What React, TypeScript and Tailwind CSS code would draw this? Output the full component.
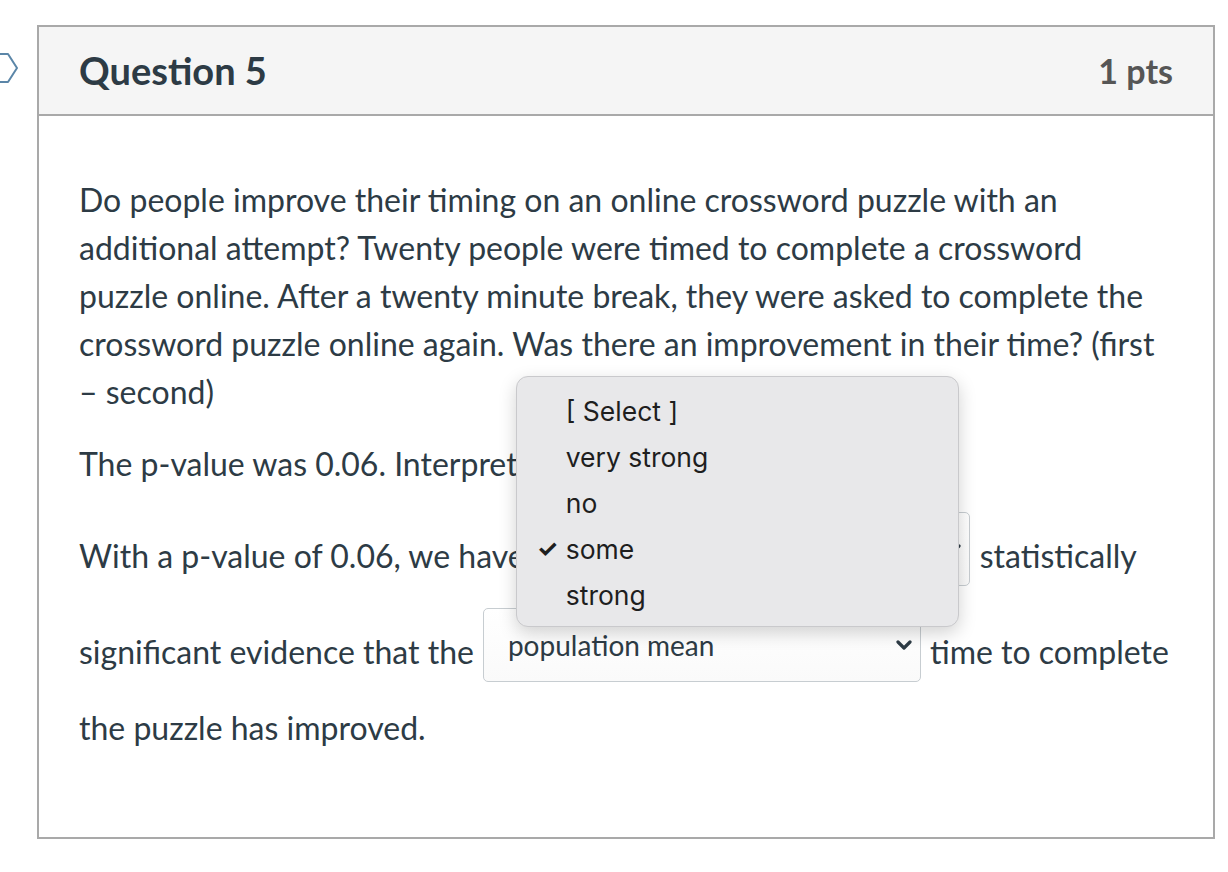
import React from "react";

const lato = "font-['Lato','Noto_Sans',sans-serif]";

function Chevron({ className = "" }: { className?: string }) {
  return (
    <svg viewBox="0 0 16 10" className={className} fill="none">
      <path d="M2 2l6 6 6-6" stroke="#2d3b45" strokeWidth="3.2" strokeLinecap="round" strokeLinejoin="round" />
    </svg>
  );
}

function FakeSelect({ value, width, children }: { value: string; width: string; children?: React.ReactNode }) {
  return (
    <div className={`relative shrink-0 ${width}`}>
      <div className="flex h-[74px] items-start justify-between rounded-[5px] border border-[#c7cdd1] bg-gradient-to-b from-white to-[#fafafa] pl-[24px] pr-[8px] pt-[18px]">
        <span className="text-[28px] leading-[36px] text-[#2d3b45]">{value}</span>
        <Chevron className="mt-[13px] h-[10px] w-[16px]" />
      </div>
      {children}
    </div>
  );
}

const options = ["[ Select ]", "very strong", "no", "some", "strong"];

// native option list, open over the first select
function OptionMenu() {
  return (
    <div className="absolute left-[-19px] top-[-136px] z-10 w-[443px] rounded-[12px] border border-[#c9c9cc] bg-[#e8e8ea] pb-[8px] pt-[11px] shadow-[0_6px_18px_rgba(0,0,0,0.18)] font-['Inter','Liberation_Sans',sans-serif] text-[26.5px] text-[#1e1e1e]">
      {options.map((o) => (
        <div key={o} className="flex h-[46px] items-center">
          <span className="w-[49px] pl-[20px] text-[24px] font-bold">{o === "some" ? "✓" : ""}</span>
          <span>{o}</span>
        </div>
      ))}
    </div>
  );
}

export default function App() {
  return (
    <div className={`min-h-[872px] bg-white pt-[25px] ${lato}`}>
      <div className="flex">
        <div className="w-[37px] shrink-0 pt-[27px]">
          <svg viewBox="0 0 37 40" className="h-[40px] w-[37px]" fill="none">
            <path d="M-10 2 H8 L17 16 L8 30 H-10" stroke="#5b86a8" strokeWidth="2" strokeLinejoin="round" />
          </svg>
        </div>

        <div className="w-[1178px] border-2 border-[#a9a9a9] text-[#2d3b45]">
          <div className="flex h-[89px] items-center justify-between border-b-2 border-[#a9a9a9] bg-[#f5f5f5] px-[40px]">
            <h2 className="text-[38px] font-bold">Question 5</h2>
            <span className="text-[34px] font-bold text-[#565656]">1 pts</span>
          </div>

          <div className="px-[40px] pb-[85px] pt-[60px] text-[32px] leading-[48px]">
            <p className="mb-[24px]">
              Do people improve their timing on an online crossword puzzle with an additional attempt? Twenty people were
              timed to complete a crossword puzzle online. After a twenty minute break, they were asked to complete the
              crossword puzzle online again. Was there an improvement in their time? (first – second)
            </p>
            <p>The p-value was 0.06. Interpret the p-value.</p>

            <div className="mt-[24px] flex items-center gap-[10px]">
              <span className="mt-[14px]">With a p-value of 0.06, we have</span>
              <FakeSelect value="some" width="w-[435px]">
                <OptionMenu />
              </FakeSelect>
              <span className="mt-[14px]">statistically</span>
            </div>

            <div className="mt-[22px] flex items-center gap-[9px]">
              <span className="mt-[14px]">significant evidence that the</span>
              <FakeSelect value="population mean" width="w-[438px]" />
              <span className="mt-[14px]">time to complete</span>
            </div>

            <p className="mt-[22px]">the puzzle has improved.</p>
          </div>
        </div>
      </div>
    </div>
  );
}
